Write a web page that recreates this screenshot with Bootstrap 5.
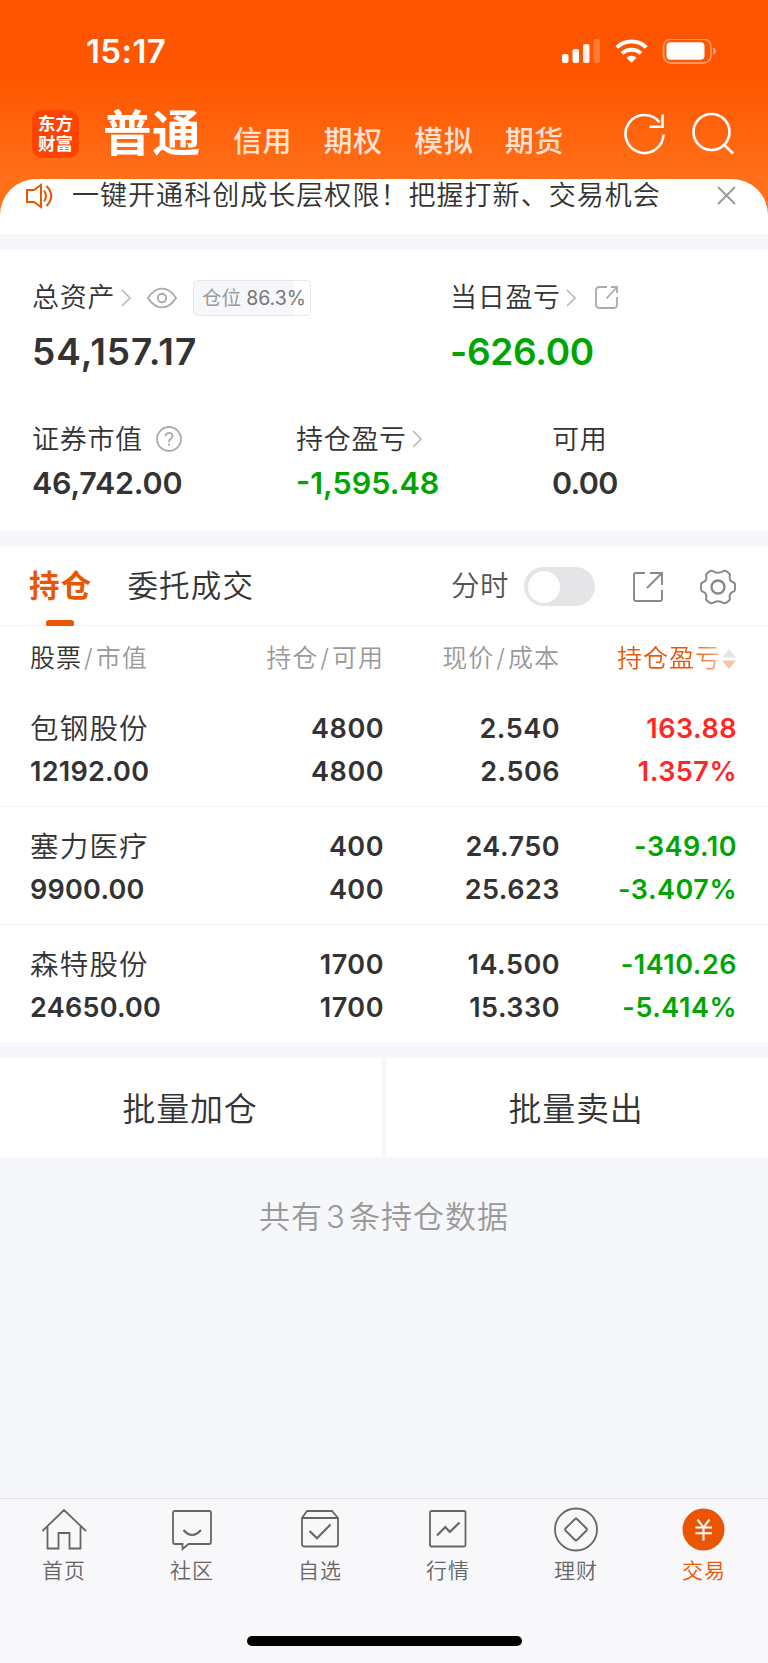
<!DOCTYPE html>
<html lang="zh-CN">
<head>
<meta charset="utf-8">
<meta name="viewport" content="width=device-width, initial-scale=1">
<title>交易</title>
<link href="https://cdn.jsdelivr.net/npm/bootstrap@5.3.0/dist/css/bootstrap.min.css" rel="stylesheet">
<style>
:root{--ink:#333;--soft:#999;--brand:#ea5504;--down:#00a600;--up:#ff2626;--page:#f6f7fa}
body{font-family:Inter,"Noto Sans CJK SC",sans-serif;color:var(--ink);background:var(--page);min-height:1663px;line-height:1;font-size:27px;font-weight:350}
svg{display:block;flex:none;fill:none}
.app-top{height:234px;background:linear-gradient(#ff5500 0,#ff5500 76px,#ff7019 179px,#ff7019 100%)}
.status{height:103px;padding:0 52px 0 86px}
.clock{font-size:33px;font-weight:600;letter-spacing:.4px}
.topnav{height:76px;padding-left:32px}
.logo{width:47px;height:48px;border-radius:10px;background:#ff4300;font-size:17.5px;line-height:20px;font-weight:700}
.acct{font-size:29px;font-weight:500;letter-spacing:.5px;width:90.6px;color:rgba(255,255,255,.82);padding-top:15px}
.acct-on{font-size:48.5px;font-weight:700;letter-spacing:.5px;width:130px;margin-left:24px}
.notice{height:55px;background:#fff;color:var(--ink);border-radius:36px 36px 0 0;padding:0 32px 22px 25px}
.notice-text{font-size:27px;letter-spacing:1.04px;margin-left:18px}
.panel{background:#fff;margin-top:16px}
.assets{height:281px;padding:0 31px 0 32px}
.lbl{letter-spacing:.7px}
.big{font-size:37px;font-weight:600}
.mid{font-size:30.5px;font-weight:600;letter-spacing:-.2px}
.down{color:var(--down)}.up{color:var(--up)}
.pos-chip{width:118px;height:36px;border:1px solid #e6e7ea;border-radius:5px;background:linear-gradient(90deg,#f6f7fa 0 86.3%,#fff 86.3%);font-size:19.5px;font-weight:400;color:#777;margin-left:16px;padding:2px 0 0 8px;white-space:nowrap}
.tabs{height:79px;border-bottom:1px solid #f2f2f4;padding:1px 31px 0 29px;font-size:30.5px}
.tab-on{color:var(--brand);font-weight:700;position:relative;height:78px;letter-spacing:1.2px}
.tab-on::after{content:"";position:absolute;left:17px;bottom:0;width:28px;height:6px;border-radius:3px 3px 1px 1px;background:var(--brand)}
.toggle{width:71px;height:39px;border-radius:20px;background:#e5e5e7;padding-left:4px}
.toggle::before{content:"";width:32px;height:32px;border-radius:50%;background:#fff}
.grid4{display:grid;grid-template-columns:203px 151px 176px 177px;padding-left:30px;align-items:center}
.grid4>:not(:first-child){text-align:right}
.heads{height:63px;padding-top:2px;font-size:25px;color:var(--soft);letter-spacing:1px}
.heads i{font-style:normal;padding:0 2px}
.fade-title{background:linear-gradient(90deg,var(--brand) 70%,#f6b894 102%);-webkit-background-clip:text;background-clip:text;color:transparent}
.hold{height:118px;line-height:42.5px;padding-top:6px;font-size:27px;font-weight:600;letter-spacing:.5px;border-bottom:1px solid #f4f4f6}
.hold:last-child{height:117px;border:0}
.hold>:first-child{letter-spacing:.25px}
.hold .stock{font-size:28.5px;font-weight:350;letter-spacing:1.2px}
.batch{height:99px;gap:4px;margin-top:16px;font-size:33px;letter-spacing:.8px}
.batch>div{background:#fff;padding:3px 2px 0 0}
.total{height:341px;padding-top:44px;font-size:31px;letter-spacing:1px;color:var(--soft)}
.total b{font-weight:350;padding:0 3px}
.tabbar{height:165px;border-top:1px solid #dfe0e3;background:#f8f8fb;color:#666;font-size:21px;letter-spacing:.9px}
.tabbar svg{width:46px;height:46px;stroke:currentColor;stroke-width:1.8}
.tabbar .name{margin-top:7px}
.homebar{width:275px;height:10px;border-radius:5px;background:#000}
</style>
</head>
<body>
<header class="app-top d-flex flex-column text-white">
  <div class="status d-flex align-items-center justify-content-between">
    <div class="clock">15:17</div>
    <svg width="155" height="26" viewBox="0 0 155 26">
      <g fill="#fff"><rect x="1" y="15" width="6.500" height="9" rx="2"/><rect x="11.500" y="10" width="6.500" height="14" rx="2"/><rect x="22" y="5" width="6.500" height="19" rx="2" opacity=".92"/><rect x="32.500" y="0" width="6.500" height="24" rx="2" opacity=".22"/>
      <path d="M70.500 24l5-5.200a7.200 7.200 0 0 0-10 0z"/></g>
      <g stroke="#fff" stroke-width="4"><path d="M55.800 8.400a21.500 21.500 0 0 1 29.500 0M61 14.500a13.800 13.800 0 0 1 19 0"/></g>
      <rect x="102.500" y="0" width="47.500" height="24" rx="7.500" stroke="#fff" stroke-width="1.800" opacity=".4"/><rect x="105.500" y="3.200" width="38" height="17.500" rx="4" fill="#fff"/><path d="M152.200 8.500c3.500 1.200 3.500 6.300 0 7.500z" fill="#fff" opacity=".45"/>
    </svg>
  </div>
  <nav class="topnav">
    <div class="d-flex align-items-center" style="height:62px">
      <div class="logo d-flex flex-column align-items-center justify-content-center"><span>东方</span><span>财富</span></div>
      <div class="acct-on">普通</div>
      <div class="acct">信用</div><div class="acct">期权</div><div class="acct">模拟</div><div class="acct">期货</div>
      <svg style="margin-left:29px" width="120" height="48" viewBox="0 0 120 48" stroke="#fff" stroke-width="2.600"><path d="M39.500 24.500A19 19 0 1 1 35.500 12.300M38.500 4.500v12.200H25.600"/><circle cx="87.500" cy="22" r="18"/><path d="M99.800 34.500l9.300 9"/></svg>
    </div>
  </nav>
  <div class="notice d-flex align-items-center">
    <svg width="29" height="26" viewBox="0 0 29 26" stroke="#ea5504" stroke-width="2"><path d="M2 7h7l7-5v22l-7-5H2zM19 7.500q4 5.500 0 11M21.500 3q9.500 10 0 20"/></svg>
    <div class="notice-text">一键开通科创成长层权限！把握打新、交易机会</div>
    <svg class="ms-auto" width="19" height="19" viewBox="0 0 19 19" stroke="#999" stroke-width="1.900"><path d="M1 1l17 17M18 1L1 18"/></svg>
  </div>
</header>

<section class="panel assets">
  <div class="d-flex align-items-center" style="height:95px">
    <div class="d-flex align-items-center" style="width:418px">
      <span class="lbl">总资产</span>
      <svg style="margin-left:3px" width="16" height="20" viewBox="0 0 16 20" stroke="#bbb" stroke-width="1.700"><path d="M4 2l8 8-8 8"/></svg>
      <svg style="margin-left:12px" width="32" height="24" viewBox="0 0 32 24" stroke="#aaa" stroke-width="1.900"><path d="M2 12C10-.5 22-.5 30 12 22 24.500 10 24.500 2 12z"/><circle cx="16" cy="12" r="4.200"/></svg>
      <div class="pos-chip d-flex align-items-center" style="margin-left:15px"><span style="color:#999">仓位</span><span style="margin-left:5px">86.3%</span></div>
    </div>
    <span class="lbl">当日盈亏</span>
    <svg style="margin-left:2px" width="16" height="20" viewBox="0 0 16 20" stroke="#bbb" stroke-width="1.700"><path d="M4 2l8 8-8 8"/></svg>
    <svg style="margin-left:15px" width="26" height="26" viewBox="0 0 26 26" stroke="#aaa" stroke-width="1.800"><path d="M13 2H5.500Q2 2 2 5.500v14Q2 23 5.500 23h14q3.500 0 3.500-3.500V12M17 2h6v6M23 2L12.500 13.500"/></svg>
  </div>
  <div class="d-flex big" style="margin-top:-12px"><div style="width:418px;letter-spacing:1px">54,157.17</div><div class="down" style="letter-spacing:-.3px">-626.00</div></div>
  <div class="d-flex align-items-center" style="height:28px;margin-top:55px">
    <div class="d-flex align-items-center" style="width:264px"><span class="lbl">证券市值</span>
      <svg style="margin-left:13px" width="26" height="26" viewBox="0 0 26 26" stroke="#aaa" stroke-width="1.800"><circle cx="13" cy="13" r="12"/><path d="M9.500 10.200q.2-3.400 3.500-3.400t3.500 3.200q0 1.600-1.800 2.800T13 16"/><path d="M13 17.500v2"/></svg></div>
    <div class="d-flex align-items-center" style="width:256px"><span class="lbl">持仓盈亏</span>
      <svg style="margin-left:2px" width="16" height="20" viewBox="0 0 16 20" stroke="#bbb" stroke-width="1.700"><path d="M4 2l8 8-8 8"/></svg></div>
    <span class="lbl">可用</span>
  </div>
  <div class="d-flex mid" style="margin-top:15px"><div style="width:264px">46,742.00</div><div class="down" style="width:256px;letter-spacing:0">-1,595.48</div><div style="letter-spacing:-.7px">0.00</div></div>
</section>

<section class="panel">
  <div class="tabs d-flex align-items-center">
    <div class="tab-on d-flex align-items-center">持仓</div>
    <div style="margin-left:35px;letter-spacing:1.2px">委托成交</div>
    <div class="ms-auto d-flex align-items-center">
      <span style="font-size:28.500px;color:#555;letter-spacing:.5px">分时</span>
      <div class="toggle d-flex align-items-center" style="margin-left:15px"></div>
      <svg style="margin-left:37px" width="32" height="32" viewBox="0 0 32 32" stroke="#888" stroke-width="1.900"><path d="M13 2H4Q2 2 2 4v24q0 2 2 2h24q2 0 2-2v-9M18 2h12v12M30 2L15 17"/></svg>
      <svg style="margin-left:35px" width="38" height="38" viewBox="0 0 38 38" stroke="#888" stroke-width="1.900" stroke-linejoin="round"><path d="M13.500 3Q19 6.500 24.500 3Q27 2 31 6.500Q29.500 12.500 33.500 14Q36 15 36 16V22Q36 23 33.500 24Q29.500 25.500 31 31.500Q27 36 24.500 35Q19 31.500 13.500 35Q11 36 7 31.500Q8.500 25.500 4.500 24Q2 23 2 22V16Q2 15 4.500 14Q8.500 12.500 7 6.500Q11 2 13.500 3z"/><circle cx="19" cy="19" r="6.500" stroke-width="2.300"/></svg>
    </div>
  </div>
  <div class="heads grid4">
    <div><span style="color:var(--ink)">股票</span><i>/</i>市值</div><div>持仓<i>/</i>可用</div><div>现价<i>/</i>成本</div>
    <div class="d-flex justify-content-end align-items-center"><span class="fade-title">持仓盈亏</span><svg width="16" height="22" viewBox="0 0 16 22"><path d="M1 9.500L8 1l7 8.500z" fill="#e6e6e8"/><path d="M1 12.500h14L8 21z" fill="#f8c4a6"/></svg></div>
  </div>
  <div id="rows"></div>
</section>

<div class="batch d-flex text-center">
  <div class="flex-fill d-flex align-items-center justify-content-center">批量加仓</div>
  <div class="flex-fill d-flex align-items-center justify-content-center">批量卖出</div>
</div>
<div class="total text-center">共有<b>3</b>条持仓数据</div>

<footer class="tabbar d-flex flex-column align-items-center">
  <div class="row row-cols-6 g-0 w-100 text-center" style="padding-top:8px">
    <div class="col"><svg class="mx-auto" viewBox="0 0 46 46"><path d="M1.500 24L23 3l22 21M6.500 20v21.500h11V26h11v15.500h11V20"/></svg><div class="name">首页</div></div>
    <div class="col"><svg class="mx-auto" viewBox="0 0 46 46"><path d="M6 4h34q2 0 2 2v29q0 2-2 2H19.500L13.500 42v-5H6q-2 0-2-2V6q0-2 2-2z"/><path d="M14.500 23q8.500 10 17.500 0" stroke-width="2.200"/></svg><div class="name">社区</div></div>
    <div class="col"><svg class="mx-auto" viewBox="0 0 46 46"><path d="M5 11l5-7h25l6 7v26q0 2.500-2.500 2.500h-31Q5 39.500 5 37zM5 11h36"/><path d="M12.500 24l7.500 7.200 13.500-13.600" stroke-width="2.200"/></svg><div class="name">自选</div></div>
    <div class="col"><svg class="mx-auto" viewBox="0 0 46 46"><rect x="5" y="4" width="35.500" height="35.500" rx="1.500"/><path d="M12 28.500l8.300-8.500 4.500 5L34.500 15.500" stroke-width="2.200"/></svg><div class="name">行情</div></div>
    <div class="col"><svg class="mx-auto" viewBox="0 0 46 46"><circle cx="23" cy="22.500" r="21"/><path d="M22 12q1-1 2 0l9.500 9.500q1 1 0 2L24 33q-1 1-2 0l-9.500-9.500q-1-1 0-2z"/></svg><div class="name">理财</div></div>
    <div class="col" style="color:var(--brand)"><svg class="mx-auto" viewBox="0 0 46 46"><circle cx="22.500" cy="22.500" r="21" fill="#ea5504" stroke="none"/><path d="M16.500 12.500l6 8 6-8M22.500 20v13.500M14.500 20.500h16.500M14.500 26.300h16.500" stroke="#fff" stroke-width="2.100"/></svg><div class="name">交易</div></div>
  </div>
  <div class="homebar mt-auto" style="margin-bottom:17px"></div>
</footer>

<script src="https://cdn.jsdelivr.net/npm/bootstrap@5.3.0/dist/js/bootstrap.bundle.min.js"></script>
<script>
const holdings = [
  ['包钢股份','12192.00','4800','4800','2.540','2.506','163.88','1.357%','up'],
  ['塞力医疗','9900.00','400','400','24.750','25.623','-349.10','-3.407%','down'],
  ['森特股份','24650.00','1700','1700','14.500','15.330','-1410.26','-5.414%','down']
];
document.getElementById('rows').innerHTML = holdings.map(h => `
  <div class="hold grid4">
    <div><div class="stock">${h[0]}</div>${h[1]}</div>
    <div><div>${h[2]}</div>${h[3]}</div>
    <div><div>${h[4]}</div>${h[5]}</div>
    <div class="${h[8]}"><div>${h[6]}</div>${h[7]}</div>
  </div>`).join('');
</script>
</body>
</html>
